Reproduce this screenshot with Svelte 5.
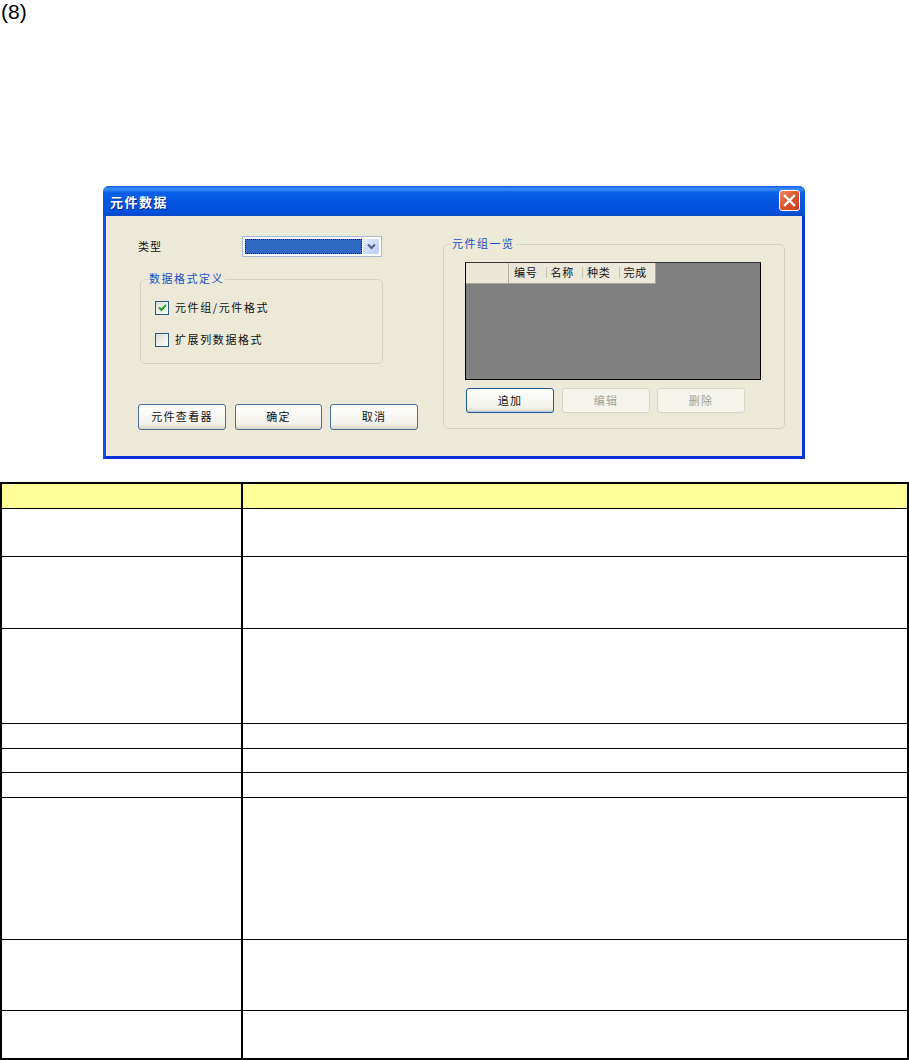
<script>
// heights of the empty rows in the spec table, top to bottom
const rows = [47, 71, 94, 24, 23, 24, 141, 70, 47];
const columns = ["编号", "名称", "种类", "完成"];
</script>

<div class="page">
  <div class="caption">(8)</div>

  <div class="dialog">
    <div class="titlebar">
      <span class="title">元件数据</span>
      <button class="close" aria-label="关闭">
        <svg width="21" height="21" viewBox="0 0 21 21">
          <path d="M6 6 L15 15 M15 6 L6 15" stroke="#fff" stroke-width="2.4" stroke-linecap="square" fill="none" />
        </svg>
      </button>
    </div>

    <div class="body">
      <div class="left">
        <div class="type_row">
          <span class="type_label">类型</span>
          <div class="combo">
            <div class="combo_value"></div>
            <div class="combo_arrow">
              <svg width="9" height="7" viewBox="0 0 9 7">
                <path d="M1 1.5 L4.5 5 L8 1.5" stroke="#4d6185" stroke-width="2" fill="none" />
              </svg>
            </div>
          </div>
        </div>

        <fieldset class="group format">
          <legend>数据格式定义</legend>
          <label class="check">
            <span class="box">
              <svg width="11" height="11" viewBox="0 0 11 11">
                <path d="M2 5.5 L4.5 8 L9 2.8" stroke="#21a121" stroke-width="2" fill="none" />
              </svg>
            </span>
            <span class="check_text">元件组/元件格式</span>
          </label>
          <label class="check">
            <span class="box"></span>
            <span class="check_text">扩展列数据格式</span>
          </label>
        </fieldset>

        <div class="left_buttons">
          <button class="btn">元件查看器</button>
          <button class="btn">确定</button>
          <button class="btn">取消</button>
        </div>
      </div>

      <fieldset class="group list">
        <legend>元件组一览</legend>
        <div class="grid">
          <div class="grid_head">
            <div class="corner"></div>
            {#each columns as col}
              <div class="col">{col}</div>
            {/each}
          </div>
        </div>
        <div class="list_buttons">
          <button class="btn small default">追加</button>
          <button class="btn small" disabled>编辑</button>
          <button class="btn small" disabled>删除</button>
        </div>
      </fieldset>
    </div>
  </div>

  <div class="spec">
    <div class="row head">
      <div class="c1"></div>
      <div class="c2"></div>
    </div>
    {#each rows as h}
      <div class="row" style="height: {h}px">
        <div class="c1"></div>
        <div class="c2"></div>
      </div>
    {/each}
  </div>
</div>

<style>
  :global(body) {
    background: #fff;
  }

  .page {
    width: 909px;
    height: 1060px;
    font-family: "Liberation Sans", Arial, sans-serif;
    overflow: hidden;
  }

  .caption {
    font-size: 21px;
    line-height: 24px;
    padding-left: 1px;
    height: 18px;
  }

  .dialog {
    box-sizing: border-box;
    width: 702px;
    height: 273px;
    margin: 168px 0 23px 103px;
    background: #ece9d8;
    border: 3px solid #0831d9;
    border-top: 0;
    border-left-color: #0a57e6;
    border-radius: 6px 6px 0 0;
    font-family: "Noto Sans CJK SC", "Liberation Sans", sans-serif;
    font-size: 11px;
    color: #111;
  }

  .titlebar {
    height: 30px;
    margin: 0 -3px;
    padding: 0 5px 2px 7px;
    box-sizing: border-box;
    display: flex;
    align-items: center;
    justify-content: space-between;
    border-radius: 6px 6px 0 0;
    background: linear-gradient(to bottom, #0a5ae8 0%, #3e8ff5 10%, #0a5fe8 22%, #0355e0 60%, #0350dc 88%, #0a49c4 100%);
  }

  .title {
    color: #fff;
    font-weight: 700;
    font-size: 13px;
    letter-spacing: 1.5px;
    text-shadow: 1px 1px 0 #0a2a90;
    margin-top: 2px;
  }

  .close {
    width: 21px;
    height: 21px;
    padding: 0;
    display: block;
    border: 1px solid #fff;
    border-radius: 3px;
    background: linear-gradient(135deg, #ea8a68 0%, #dd5a30 45%, #c8401c 100%);
  }

  .close svg {
    display: block;
    margin: -1px;
  }

  .body {
    display: flex;
    padding: 20px 17px 0 32px;
    justify-content: space-between;
    align-items: flex-start;
  }

  .left {
    width: 280px;
  }

  .type_row {
    display: flex;
    align-items: center;
    height: 21px;
  }

  .type_label {
    width: 104px;
    letter-spacing: 1px;
    padding-bottom: 2px;
  }

  .combo {
    box-sizing: border-box;
    width: 140px;
    height: 21px;
    display: flex;
    border: 1px solid #a5b9d5;
    background: #fff;
    padding: 2px;
  }

  .combo_value {
    flex: 1;
    background: #316ac5;
    border: 1px dotted #1c1c10;
  }

  .combo_arrow {
    width: 16px;
    margin-left: 1px;
    display: flex;
    align-items: center;
    justify-content: center;
    background: linear-gradient(135deg, #e4ecfd, #b8ccf6);
    border-radius: 2px;
  }

  .group {
    box-sizing: border-box;
    margin: 0;
    padding: 0;
    min-width: 0;
    border: 1px solid #d5d2bf;
    border-radius: 5px;
  }

  .group legend {
    color: #1a50c8;
    font-size: 11px;
    line-height: 14px;
    letter-spacing: 1.5px;
    padding: 0 1px 2px;
  }

  .format {
    width: 243px;
    height: 93px;
    margin: 14px 0 0 2px;
    padding: 14px 0 0 14px;
  }

  .format legend {
    margin-left: -7px;
  }

  .check {
    display: flex;
    align-items: center;
    height: 13px;
    gap: 6px;
    letter-spacing: 1.6px;
  }

  .check + .check {
    margin-top: 19px;
  }

  .check_text {
    margin-bottom: 2px;
  }

  .box {
    box-sizing: border-box;
    width: 14px;
    height: 14px;
    border: 1px solid #2b5a80;
    background: linear-gradient(135deg, #dcdcd5, #fff);
    display: flex;
    align-items: center;
    justify-content: center;
  }

  .left_buttons {
    display: flex;
    gap: 8px;
    margin-top: 40px;
  }

  .left_buttons .btn:first-child {
    margin-right: 1px;
  }

  .left_buttons .btn:nth-child(2) {
    width: 87px;
  }

  .btn {
    box-sizing: border-box;
    width: 88px;
    height: 26px;
    padding: 0 0 2px;
    border: 1px solid #4a7196;
    border-radius: 3px;
    background: linear-gradient(to bottom, #fff, #f2f1ea 80%, #d9d5c6);
    font-family: inherit;
    font-size: 11px;
    letter-spacing: 1.3px;
    color: #111;
  }

  .btn.small {
    height: 25px;
  }

  .btn.default {
    border-color: #1d5a96;
    box-shadow: inset 0 -1px 0 #b9cbe4;
  }

  .btn:disabled {
    background: #f4f3ec;
    border-color: #d8d5c5;
    color: #a3a294;
  }

  .list {
    width: 342px;
    height: 193px;
    margin-top: 0;
    padding: 10px 0 0 21px;
  }

  .list legend {
    margin-left: -14px;
  }

  .grid {
    box-sizing: border-box;
    width: 296px;
    height: 118px;
    background: #808080;
    border: 1px solid #000;
    border-top-color: #333;
  }

  .grid_head {
    display: flex;
    width: fit-content;
    height: 20px;
    background: #ebe8d9;
    border-bottom: 1px solid #aca899;
    border-right: 1px solid #aca899;
  }

  .corner {
    box-sizing: border-box;
    width: 43px;
    border-right: 1px solid #b5b2a2;
  }

  .col {
    box-sizing: border-box;
    width: 36.5px;
    line-height: 18px;
    padding-left: 5px;
    letter-spacing: 0.8px;
    white-space: nowrap;
    position: relative;
  }

  .col + .col::before {
    content: "";
    position: absolute;
    left: 0;
    top: 4px;
    bottom: 5px;
    width: 1px;
    background: #c6c3b2;
  }

  .list_buttons {
    display: flex;
    gap: 8px;
    margin: 8px 0 0 1px;
  }

  .list_buttons .btn:nth-child(2) {
    margin-right: -1px;
  }

  .spec {
    box-sizing: border-box;
    width: 909px;
    border: 2px solid #000;
  }

  .row {
    display: flex;
    border-top: 1px solid #000;
  }

  .row.head {
    height: 24px;
    border-top: 0;
    background: #ffff99;
  }

  .c1 {
    width: 239px;
    flex: none;
  }

  .c2 {
    flex: 1;
    border-left: 2px solid #000;
  }
</style>
